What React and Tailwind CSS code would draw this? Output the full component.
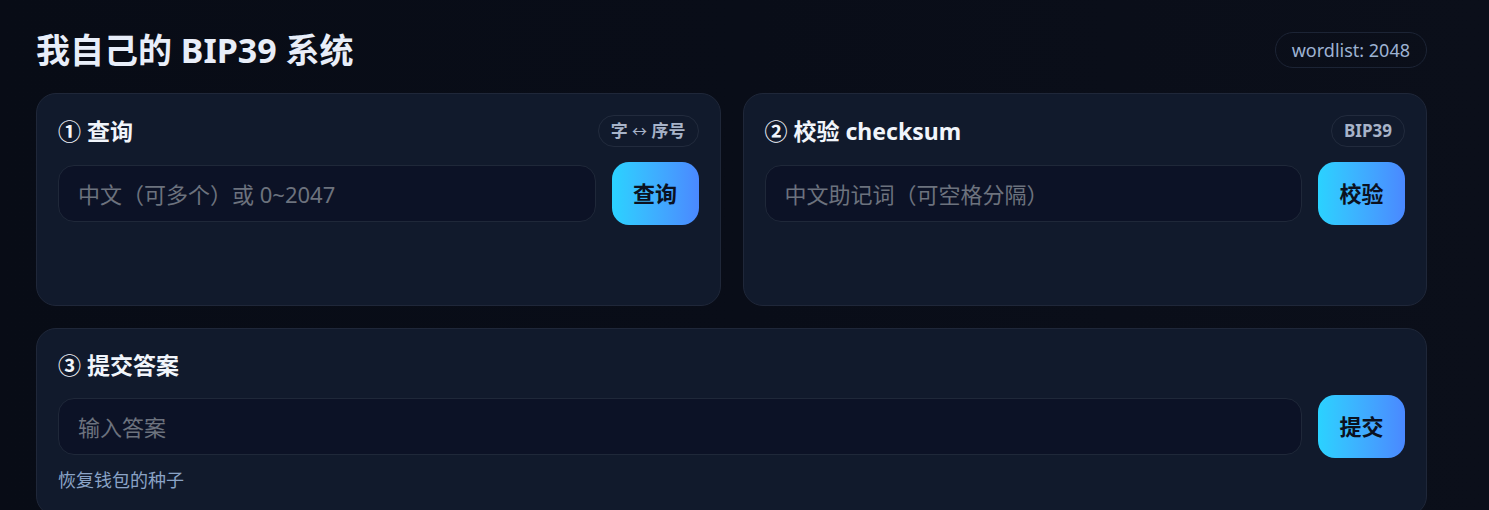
import React from 'react';

const font = { fontFamily: '"Noto Sans", "Noto Sans CJK SC", sans-serif' };

const Badge = ({ children, className = '' }) => (
  <span className={`inline-flex items-center h-[32px] px-[12px] rounded-full border border-[#222b3d] text-[17px] font-bold text-[#a7b3c8] ${className}`}>
    <span>{children}</span>
  </span>
);

const ActionRow = ({ placeholder, label }) => (
  <div className="flex items-center gap-[16px]">
    <input
      type="text"
      placeholder={placeholder}
      className="flex-1 h-[57px] px-[19px] rounded-[16px] bg-[#0c1226] border border-[#1f2839] text-[22px] text-[#e5e7eb] placeholder:text-[#6c727e] outline-none"
    />
    <button className="w-[87px] h-[63px] rounded-[17px] bg-linear-to-r from-[#2ad2ff] to-[#4a88ff] text-[#0b1120] text-[22px] font-bold">
      {label}
    </button>
  </div>
);

const Card = ({ title, badge, children, className = '' }) => (
  <div className={`rounded-[20px] bg-[#111a2c] border border-[#1f2739] px-[21px] pt-[21px] pb-[21px] ${className}`}>
    <div className="flex items-center justify-between min-h-[30px] mb-[15px]">
      <h2 className="text-[23px] leading-[30px] font-bold text-[#f1f5fb]">{title}</h2>
      {badge && <Badge>{badge}</Badge>}
    </div>
    {children}
  </div>
);

export default function App() {
  return (
    <div
      className="min-h-screen bg-linear-to-r from-[#080c16] via-[#090d18] to-[#0b0f1a] pl-[36px] pt-[28px]"
      style={font}
    >
      <div className="w-[1391px]">
        <header className="flex items-center justify-between h-[44px]">
          <h1 className="text-[34px] font-bold text-[#e8eef9] leading-none">我自己的 BIP39 系统</h1>
          <span className="inline-flex items-center h-[36px] px-[16px] rounded-full border border-[#1c2435] text-[18px] text-[#9db2d2]">
            wordlist: 2048
          </span>
        </header>

        <div className="grid grid-cols-2 gap-[22px] mt-[21px]">
          <Card
            title="① 查询"
            badge={<>字 <span className="text-[15px] font-normal">↔</span> 序号</>}
            className="h-[213px]"
          >
            <ActionRow placeholder="中文（可多个）或 0~2047" label="查询" />
          </Card>
          <Card title="② 校验 checksum" badge="BIP39" className="h-[213px]">
            <ActionRow placeholder="中文助记词（可空格分隔）" label="校验" />
          </Card>
        </div>

        <Card title="③ 提交答案" className="mt-[22px]">
          <ActionRow placeholder="输入答案" label="提交" />
          <p className="mt-[9px] text-[18px] text-[#8aa3c6]">恢复钱包的种子</p>
        </Card>
      </div>
    </div>
  );
}
